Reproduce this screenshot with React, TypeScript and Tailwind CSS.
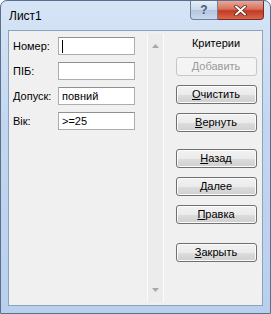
import React from "react";

const fields = [
  { label: "Номер:", value: "", caret: true },
  { label: "ПІБ:", value: "" },
  { label: "Допуск:", value: "повний" },
  { label: "Вік:", value: ">=25" },
];

function Btn({
  first,
  rest,
  disabled,
  className = "",
}: {
  first: string;
  rest: string;
  disabled?: boolean;
  className?: string;
}) {
  if (disabled) {
    return (
      <div
        className={`h-[19px] w-[81px] rounded-[3px] border border-[#c5c8cb] bg-[#f4f4f4] flex items-center justify-center text-[11px] text-[#9a9a9a] ${className}`}
      >
        {first}
        {rest}
      </div>
    );
  }
  return (
    <div
      className={`h-[19px] w-[81px] rounded-[3px] border border-[#707070] bg-[linear-gradient(#f2f2f2_0%,#ebebeb_50%,#dddddd_51%,#cfcfcf_100%)] shadow-[inset_0_0_0_1px_#fbfbfb] flex items-center justify-center text-[11px] text-black ${className}`}
    >
      <span className="underline underline-offset-1">{first}</span>
      {rest}
    </div>
  );
}

export default function App() {
  return (
    <div className="w-[271px] h-[314px] bg-white font-['Liberation_Sans',Arial,sans-serif]">
      <div className="w-full h-full rounded-t-[7px] border border-[#5a6f8d] bg-[linear-gradient(#d6e5f6,#c2d7ef_40%,#b9d0ec)] flex flex-col">
        {/* title bar */}
        <div className="h-[29px] flex items-start justify-between pl-[7px] pr-[6px]">
          <span className="mt-[6px] ml-px text-[12px] text-black">Лист1</span>
          <div className="flex">
            <div className="w-[28px] h-[19px] rounded-bl-[4px] border border-t-0 border-[#6d7f99] bg-[linear-gradient(#e6eef8,#c9d8ea_50%,#b3c6de_51%,#c8d9ee)] flex items-center justify-center text-[12px] font-bold text-[#4a5a72]">
              ?
            </div>
            <div className="w-[46px] h-[19px] rounded-br-[4px] border border-l-0 border-t-0 border-[#7a2a22] bg-[linear-gradient(#e9a99a,#d7705c_45%,#c13b22_55%,#d9674d)] flex items-center justify-center">
              <svg width="13" height="11" viewBox="0 0 13 11">
                <path
                  d="M2 1.5 L11 9.5 M11 1.5 L2 9.5"
                  stroke="#5a1a12"
                  strokeWidth="3.4"
                  strokeLinecap="round"
                />
                <path
                  d="M2 1.5 L11 9.5 M11 1.5 L2 9.5"
                  stroke="#ffffff"
                  strokeWidth="2"
                  strokeLinecap="round"
                />
              </svg>
            </div>
          </div>
        </div>

        {/* client area */}
        <div className="flex-1 ml-[7px] mr-[7px] mb-[7px] border border-[#8da2bf] bg-[#f0f0f0] flex">
          {/* fields */}
          <div className="w-[137px] pl-[4px] pt-[6px] flex flex-col gap-[7px]">
            {fields.map((f) => (
              <div key={f.label} className="flex items-center h-[18px]">
                <span className="w-[45px] text-[11px] text-black">{f.label}</span>
                <div className="w-[77px] h-[18px] border border-[#abadb3] border-t-[#8e8f8f] bg-white flex items-center pl-[3px] text-[11px] text-black">
                  {f.caret && <span className="w-px h-[13px] bg-black" />}
                  {f.value}
                </div>
              </div>
            ))}
          </div>

          {/* scrollbar */}
          <div className="w-[17px] my-[3px] ml-[1px] border-x border-[#fafafa] bg-[#ececec] flex flex-col items-center justify-between py-[10px]">
            <svg width="7" height="4" viewBox="0 0 7 4">
              <path d="M0 4 L3.5 0 L7 4 Z" fill="#a8a8a8" />
            </svg>
            <svg width="7" height="4" viewBox="0 0 7 4">
              <path d="M0 0 L3.5 4 L7 0 Z" fill="#a8a8a8" />
            </svg>
          </div>

          {/* buttons */}
          <div className="flex-1 flex flex-col items-center pt-[6px] pl-[6px]">
            <span className="text-[11px] text-black leading-[13px]">Критерии</span>
            <Btn first="Д" rest="обавить" disabled className="mt-[7px]" />
            <Btn first="О" rest="чистить" className="mt-[9px]" />
            <Btn first="В" rest="ернуть" className="mt-[9px]" />
            <Btn first="Н" rest="азад" className="mt-[17px]" />
            <Btn first="Д" rest="алее" className="mt-[9px]" />
            <Btn first="П" rest="равка" className="mt-[9px]" />
            <Btn first="З" rest="акрыть" className="mt-[19px]" />
          </div>
        </div>
      </div>
    </div>
  );
}
